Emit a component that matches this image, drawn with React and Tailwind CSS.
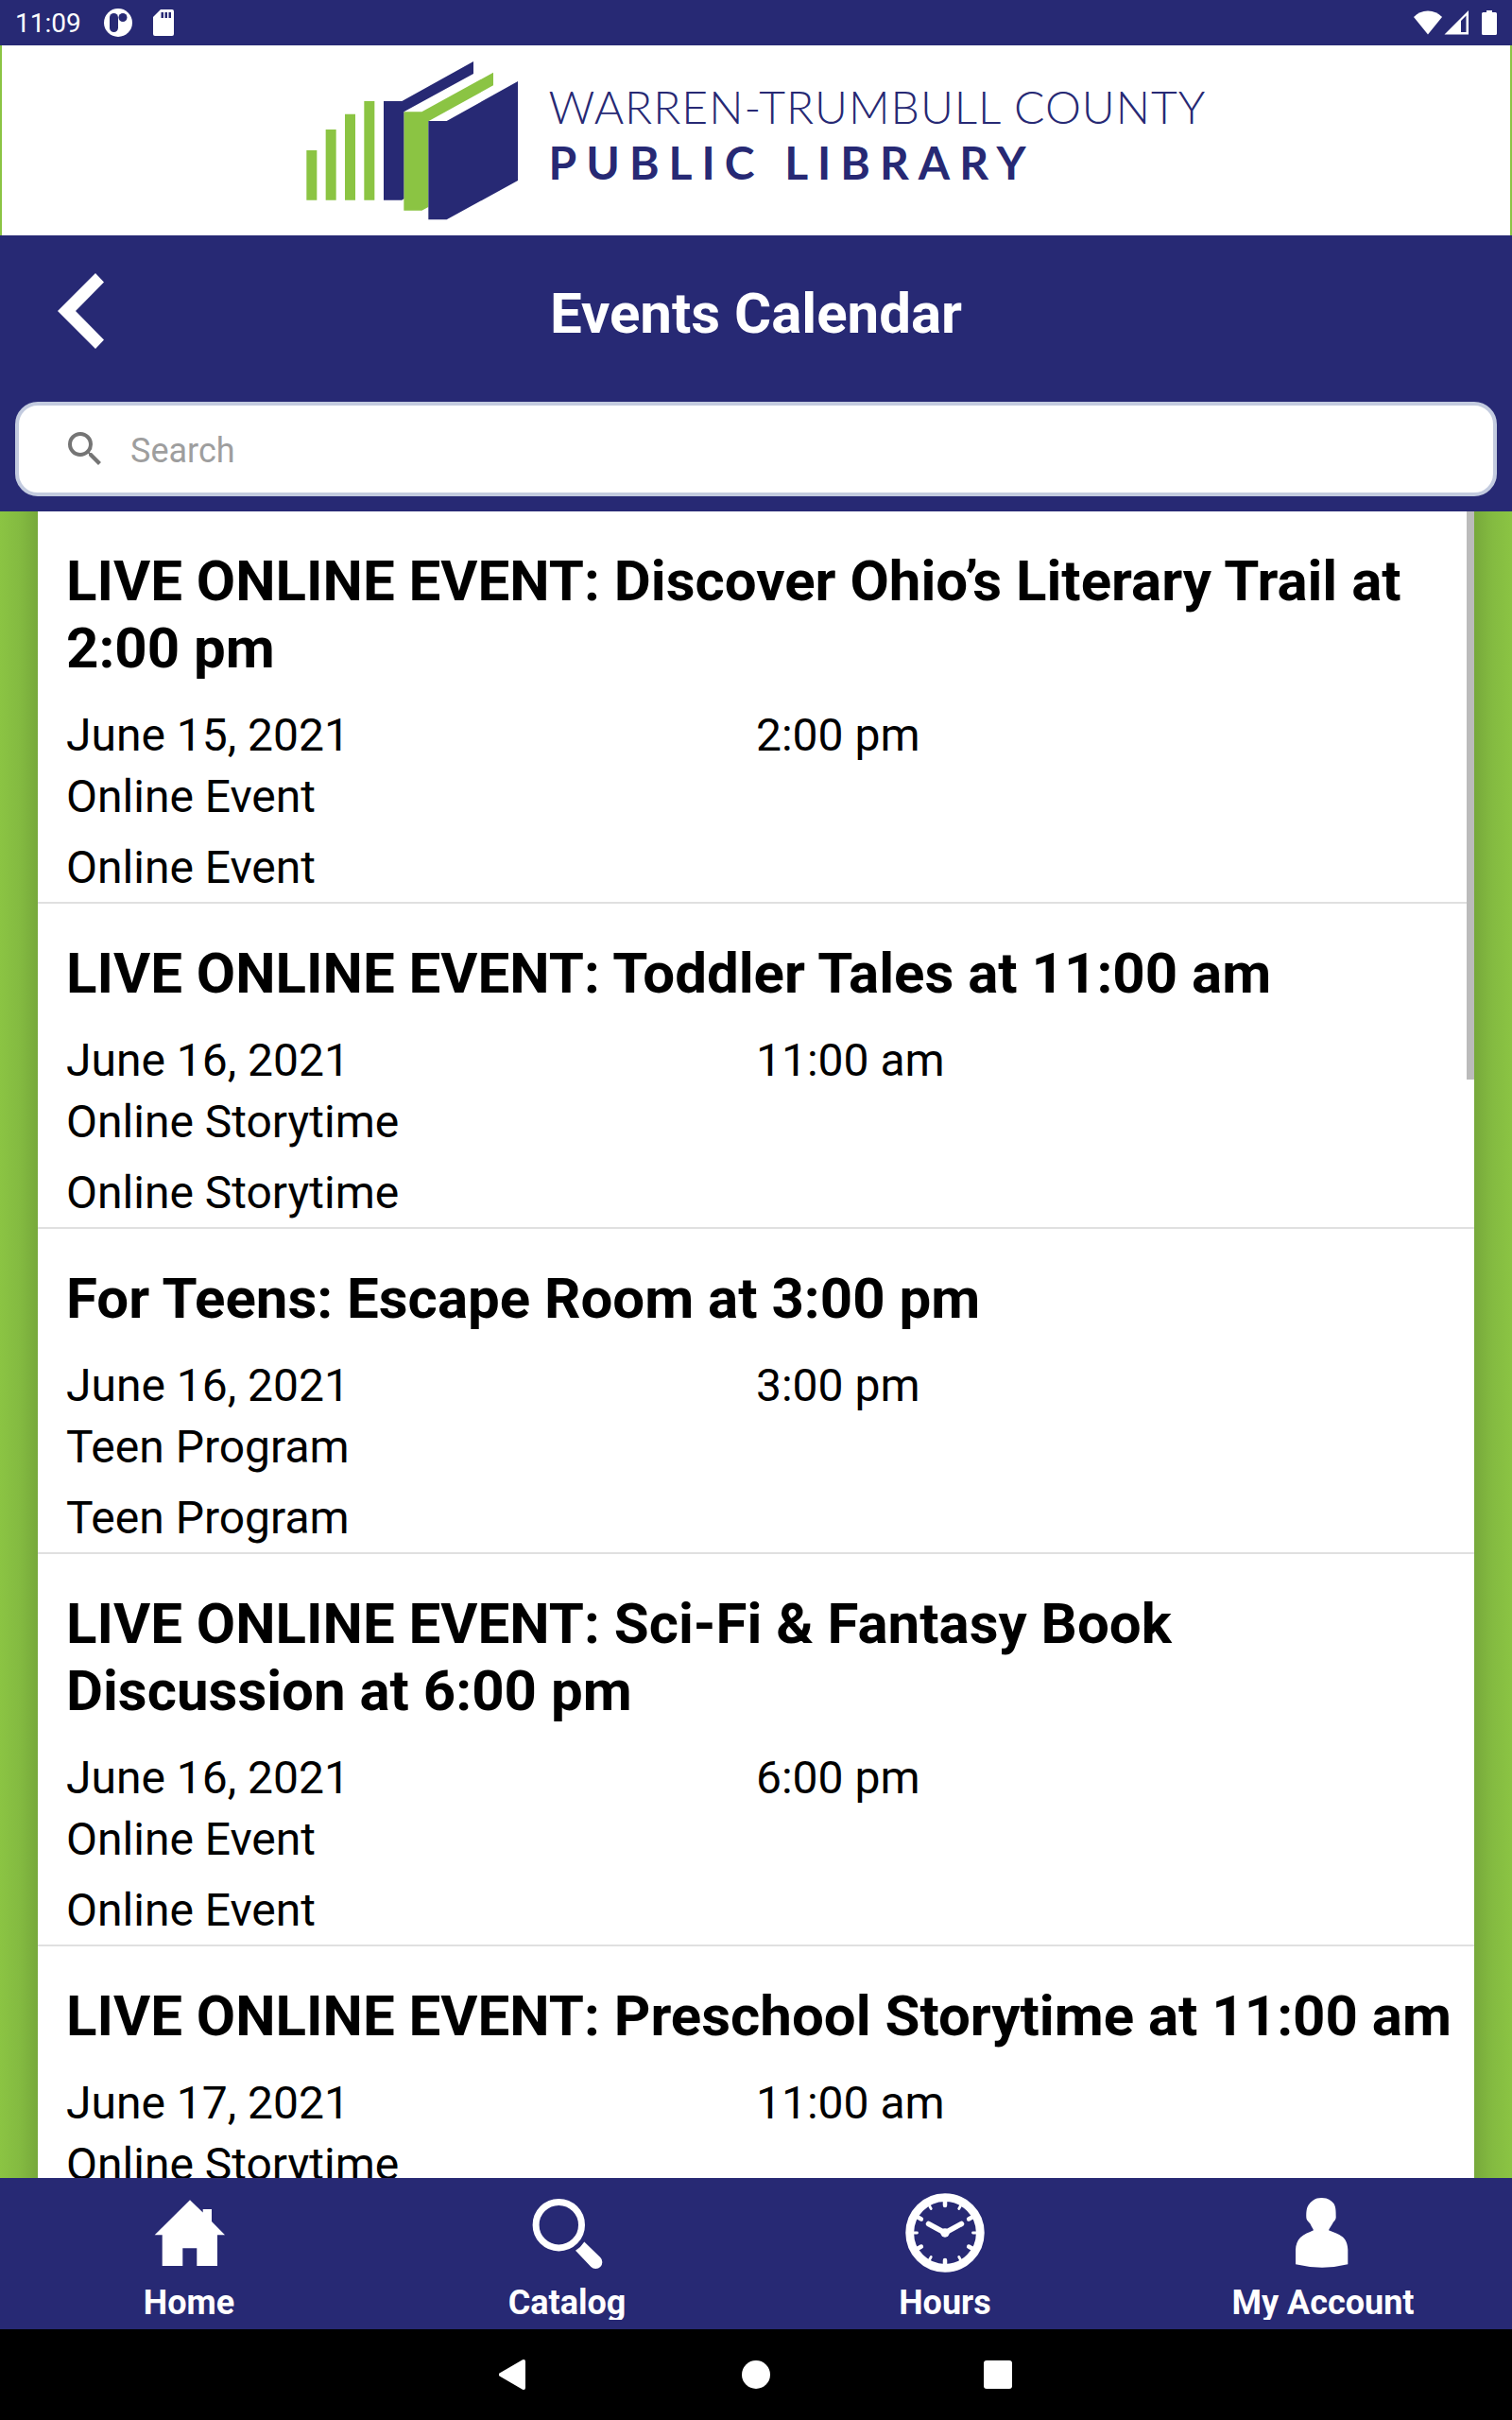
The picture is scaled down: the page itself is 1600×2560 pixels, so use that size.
import React from 'react';
import { MdSearch } from 'react-icons/md';

const events = [
  { id: 1, title: 'LIVE ONLINE EVENT: Discover Ohio’s Literary Trail at 2:00 pm', date: 'June 15, 2021', time: '2:00 pm', type: 'Online Event' },
  { id: 2, title: 'LIVE ONLINE EVENT: Toddler Tales at 11:00 am', date: 'June 16, 2021', time: '11:00 am', type: 'Online Storytime' },
  { id: 3, title: 'For Teens: Escape Room at 3:00 pm', date: 'June 16, 2021', time: '3:00 pm', type: 'Teen Program' },
  { id: 4, title: 'LIVE ONLINE EVENT: Sci-Fi & Fantasy Book Discussion at 6:00 pm', date: 'June 16, 2021', time: '6:00 pm', type: 'Online Event' },
  { id: 5, title: 'LIVE ONLINE EVENT: Preschool Storytime at 11:00 am', date: 'June 17, 2021', time: '11:00 am', type: 'Online Storytime' },
];

const StatusBar = () => (
  <div className="h-12 shrink-0 flex items-center justify-between px-4 text-white">
    <div className="flex items-center">
      <span className="pt-[2px] text-[28px] leading-8">11:09</span>
      <svg className="w-[30px] h-[30px] ml-6" viewBox="0 0 30 30">
        <circle cx="15" cy="15" r="15" fill="#fff" />
        <rect x="6" y="5" width="9" height="20" rx="4.5" fill="#272974" />
        <circle cx="20" cy="9.5" r="4.5" fill="#272974" />
      </svg>
      <svg className="w-[22px] h-7 ml-[22px]" viewBox="0 0 22 28">
        <path fill="#fff" d="M8 0h12a2 2 0 0 1 2 2v24a2 2 0 0 1-2 2H2a2 2 0 0 1-2-2V8z" />
        <path fill="#272974" d="M8.500 3h2.500v6H8.500zM12.500 3H15v6h-2.500zM16.500 3H19v6h-2.500z" />
      </svg>
    </div>
    <div className="flex items-center">
      <svg className="w-[30px] h-[26px]" viewBox="0 0 30 26">
        <path fill="#fff" d="M0 7Q6 0.500 15 0.500T30 7L15 25.500z" />
      </svg>
      <svg className="w-[26px] h-[26px] ml-[2px]" viewBox="0 0 26 26">
        <path fill="#fff" fillRule="evenodd" d="M26 0v25.500H0.500zM18 11v12h5.500V5.500z" />
      </svg>
      <svg className="w-4 h-[26px] ml-[14px]" viewBox="0 0 16 26">
        <path fill="#fff" d="M5 0h6v2h3.500a1.500 1.500 0 0 1 1.500 1.500v21a1.500 1.500 0 0 1-1.500 1.500h-13a1.500 1.500 0 0 1-1.500-1.500v-21a1.500 1.500 0 0 1 1.500-1.500H5z" />
      </svg>
    </div>
  </div>
);

const LogoBanner = () => (
  <div className="h-[201px] shrink-0 flex items-center justify-center gap-8 bg-white border-x-2 border-[#8bc443]">
    <svg className="w-[225px] h-[168px]" viewBox="75 48 675 504">
      <g fill="#8bc443">
        <path d="M76 330h33v158H76zM137 264h33v224h-33zM198 215h33v273h-33zM259 174h33v314h-33z" />
        <path d="M385 208h57L669 83v41L463 238v272l-21 11h-57z" />
      </g>
      <g fill="#272974">
        <path d="M321 174h58L606 48v39L385 208v276l-6 4h-58z" />
        <path d="M463 237h58l226-126v315L521 550h-58z" />
      </g>
    </svg>
    <div className="pb-[14px] text-[#272974] font-[Lato] text-[48px] leading-[59px] whitespace-nowrap">
      <p className="font-light tracking-[1px]">WARREN-TRUMBULL COUNTY</p>
      <p className="font-bold tracking-[10px]">PUBLIC LIBRARY</p>
    </div>
  </div>
);

const Header = () => (
  <header className="shrink-0">
    <div className="h-40 grid grid-cols-[160px_1fr_160px] items-center text-white">
      <button type="button" aria-label="Back" className="pl-[61px]">
        <svg className="w-[49px] h-20" viewBox="0 0 49 80">
          <path fill="#fff" d="M40 0l9 9.500L19 40l30 30.500L40 80L0 40z" />
        </svg>
      </button>
      <h1 className="pt-1 text-[60px] leading-[71px] font-bold text-center">Events Calendar</h1>
    </div>
    <div className="p-4">
      <label className="h-[100px] flex items-center gap-6 pl-[46px] pr-6 bg-white border-4 border-[#c3cbdf] rounded-3xl">
        <MdSearch className="w-12 h-12 shrink-0 text-[#757575]" />
        <input
          type="text"
          aria-label="Search"
          placeholder="Search"
          className="flex-1 min-w-0 pt-1 text-4xl text-black placeholder:text-[#9e9e9e] outline-none"
        />
      </label>
    </div>
  </header>
);

const EventRow = ({ event }) => (
  <li className="pt-[38px] pb-2 px-[30px] border-b-2 border-[#e0e0e0] text-[48px] leading-[57px]">
    <h2 className="-mr-5 text-[60px] leading-[71px] font-bold">{event.title}</h2>
    <div className="grid grid-cols-2 mt-7">
      <p>{event.date}</p>
      <p>{event.time}</p>
    </div>
    <p className="mt-2">{event.type}</p>
    <p className="mt-[18px]">{event.type}</p>
  </li>
);

const HomeIcon = () => (
  <svg className="w-[84px] h-[84px]" viewBox="0 0 84 84" fill="#fff">
    <path d="M43 7.300L56.700 20.500V17H66v13L80 44.300h-8V77H50.300V58.300h-15V77H13.700V44.300h-8z" />
  </svg>
);

const CatalogIcon = () => (
  <svg className="w-[84px] h-[84px]" viewBox="0 0 84 84" fill="none">
    <circle cx="33.300" cy="33.700" r="24.200" stroke="#fff" strokeWidth="7" />
    <path fill="#fff" d="M60.300 51.500L77.300 68a7 7 0 0 1-9.900 9.900L51 60.800Q56.500 57.500 60.300 51.500z" />
  </svg>
);

const HoursIcon = () => (
  <svg className="w-[84px] h-[84px]" viewBox="-42 -42 84 84" fill="none" stroke="#fff" strokeLinecap="round">
    <circle r="37.300" strokeWidth="8.800" />
    {[0, 60, 120, 180, 240, 300].map(a => (
      <g key={a} transform={`rotate(${a})`}>
        <path strokeWidth="4.500" d="M0-34v5" />
        <path strokeWidth="2.800" transform="rotate(30)" d="M0-34v4.500" />
      </g>
    ))}
    <path strokeWidth="5.500" d="M-17.500-9.500L0 0L17.500-9.500" />
    <circle r="4.700" fill="#fff" stroke="none" />
  </svg>
);

const AccountIcon = () => (
  <svg className="w-[84px] h-[84px]" viewBox="0 0 84 84" fill="#fff">
    <path d="M40.500 5C48 5 51 8.500 53 10.500C55.500 14 55.700 18 55.700 25.500C55.500 29 53 30 52 32.500C50.500 35 49 37 48 39.300C53 41.500 58 42.500 63 46.500C67 50 68.300 56 68.300 60V75.300Q55 78.700 41 78.700T13 75.300V60C13 55 15 50 18 47C22 43.500 27 41.500 32 39.300C31 37 29.500 35 28.500 32.500C27 30 24.500 29.500 24.300 25.500C24.300 19 24.500 15 27.500 11.500C30 8.500 33 5 40.500 5z" />
  </svg>
);

const tabs = [
  { label: 'Home', Icon: HomeIcon },
  { label: 'Catalog', Icon: CatalogIcon },
  { label: 'Hours', Icon: HoursIcon },
  { label: 'My Account', Icon: AccountIcon },
];

const TabBar = () => (
  <nav className="h-40 shrink-0 grid grid-cols-4 text-white">
    {tabs.map(({ label, Icon }) => (
      <a key={label} href="#" className="flex flex-col items-center pt-4 gap-[10px]">
        <Icon />
        <span className="h-10 overflow-hidden text-4xl leading-[44px] font-bold">{label}</span>
      </a>
    ))}
  </nav>
);

const SystemNav = () => (
  <div className="h-24 shrink-0 bg-black flex items-center justify-center gap-56">
    <button type="button" aria-label="System back">
      <svg className="w-8 h-8" viewBox="0 0 32 32">
        <path fill="#fff" d="M0.500 14.500L25 0.300Q28 -0.500 28 2v28Q28 32.500 25 31.700L0.500 17.500Q-1 16 0.500 14.500z" />
      </svg>
    </button>
    <button type="button" aria-label="System home">
      <svg className="w-8 h-8" viewBox="0 0 32 32"><circle cx="16" cy="16" r="15" fill="#fff" /></svg>
    </button>
    <button type="button" aria-label="Recent apps">
      <svg className="w-8 h-8" viewBox="0 0 32 32"><rect x="1" y="1" width="30" height="30" rx="3" fill="#fff" /></svg>
    </button>
  </div>
);

export default function App() {
  return (
    <div className="h-screen flex flex-col bg-[#272974] font-[Roboto,sans-serif] text-black">
      <StatusBar />
      <LogoBanner />
      <Header />
      {/* the gutters darken towards the sheet */}
      <main className="relative flex-1 min-h-0 overflow-hidden px-10 bg-[linear-gradient(to_right,#8bc443,#84bb41_20px,#77a93b_40px,#77a93b_calc(100%-40px),#84bb41_calc(100%-20px),#8bc443)]">
        <ul className="min-h-full bg-white">
          {events.map(event => <EventRow key={event.id} event={event} />)}
        </ul>
        {/* scroll thumb */}
        <div className="absolute top-0 right-10 w-2 h-[601px] bg-[#bbbbbb]" />
      </main>
      <TabBar />
      <SystemNav />
    </div>
  );
}
